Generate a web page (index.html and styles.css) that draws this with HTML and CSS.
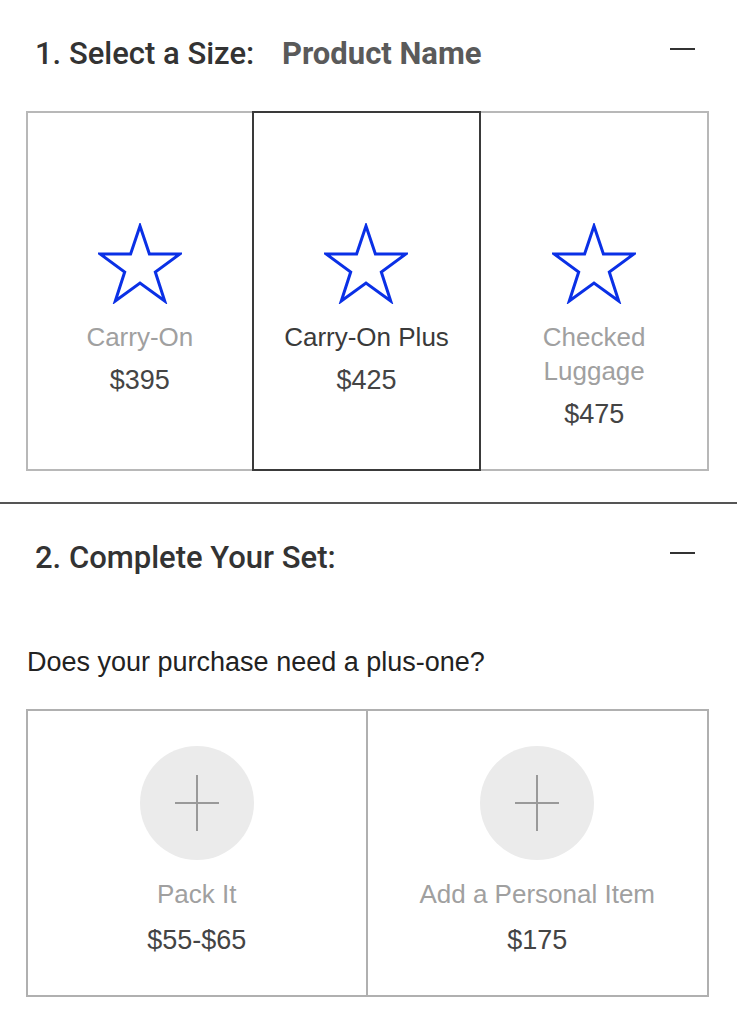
FILE: index.html
```html
<!DOCTYPE html>
<html lang="en">
<head>
    <meta charset="UTF-8">
    <title>Build Your Set</title>
    <link rel="stylesheet" href="styles.css">
</head>
<body>

<div class="section">
    <div class="section-head">
        <h2>1. Select a Size: <span class="product-name">Product Name</span></h2>
        <span class="collapse"></span>
    </div>

    <div class="size-grid">
        <div class="size-card">
            <svg class="star" viewBox="0 0 84 81">
                <polygon points="42,3 51.4,31 81.9,31 57.3,49 66.7,78 42,60 17.3,78 26.7,49 2.1,31 32.6,31"/>
            </svg>
            <div class="size-name">Carry-On</div>
            <div class="price">$395</div>
        </div>
        <div class="size-card selected">
            <svg class="star" viewBox="0 0 84 81">
                <polygon points="42,3 51.4,31 81.9,31 57.3,49 66.7,78 42,60 17.3,78 26.7,49 2.1,31 32.6,31"/>
            </svg>
            <div class="size-name">Carry-On Plus</div>
            <div class="price">$425</div>
        </div>
        <div class="size-card">
            <svg class="star" viewBox="0 0 84 81">
                <polygon points="42,3 51.4,31 81.9,31 57.3,49 66.7,78 42,60 17.3,78 26.7,49 2.1,31 32.6,31"/>
            </svg>
            <div class="size-name">Checked<br>Luggage</div>
            <div class="price">$475</div>
        </div>
    </div>
</div>

<hr class="divider">

<div class="section">
    <div class="section-head">
        <h2>2. Complete Your Set:</h2>
        <span class="collapse"></span>
    </div>

    <p class="question">Does your purchase need a plus-one?</p>

    <div class="addon-grid">
        <div class="addon-card">
            <div class="add-circle"></div>
            <div class="addon-name">Pack It</div>
            <div class="price">$55-$65</div>
        </div>
        <div class="addon-card">
            <div class="add-circle"></div>
            <div class="addon-name">Add a Personal Item</div>
            <div class="price">$175</div>
        </div>
    </div>
</div>

</body>
</html>
```

FILE: styles.css
```css
body {
    margin: 0;
    font-family: 'Liberation Sans', Arial, sans-serif;
    background: white;
    color: #333;
    width: 737px;
}

.section {
    padding: 0 28px 0 26px;
}

.section-head {
    display: flex;
    justify-content: space-between;
    align-items: center;
    padding: 36px 14px 0 9px;
}

.section-head h2 {
    margin: 0;
    font-family: Roboto, 'Liberation Sans', sans-serif;
    font-size: 31px;
    line-height: 35px;
    font-weight: 500;
    color: #333;
}

.product-name {
    margin-left: 20px;
    font-weight: bold;
    color: #5a5a5a;
}

.collapse {
    width: 25px;
    height: 2px;
    background: #333;
    margin-top: -9px;
}

.size-grid {
    display: grid;
    grid-template-columns: repeat(3, 1fr);
    margin-top: 40px;
    height: 360px;
}

.size-card {
    border: 2px solid #b8b8b8;
    text-align: center;
    padding-top: 110px;
    box-sizing: border-box;
}

.size-card + .size-card {
    margin-left: -2px;
}

.size-card.selected {
    border-color: #3a3a3a;
    position: relative;
}

.star {
    width: 84px;
    height: 81px;
    display: block;
    margin: 0 auto;
}

.star polygon {
    fill: none;
    stroke: #0a30e6;
    stroke-width: 3;
}

.size-name {
    margin-top: 16px;
    font-size: 26px;
    line-height: 34px;
    color: #a0a0a0;
}

.selected .size-name {
    color: #3a3a3a;
}

.price {
    margin-top: 9px;
    font-size: 27px;
    line-height: 34px;
    color: #444;
}

.divider {
    margin: 31px 0 0;
    border: none;
    border-top: 2px solid #555;
}

.question {
    margin: 72px 0 0 1px;
    font-size: 27px;
    line-height: 31px;
    color: #222;
}

.addon-grid {
    display: grid;
    grid-template-columns: 1fr 1fr;
    margin-top: 31px;
    height: 288px;
}

.addon-card {
    border: 2px solid #b0b0b0;
    text-align: center;
    padding-top: 35px;
    box-sizing: border-box;
}

.addon-card + .addon-card {
    margin-left: -2px;
}

.add-circle {
    width: 114px;
    height: 114px;
    border-radius: 50%;
    background: #ebebeb;
    margin: 0 auto;
    position: relative;
}

.add-circle::before,
.add-circle::after {
    content: "";
    position: absolute;
    background: #999;
    left: 50%;
    top: 50%;
    transform: translate(-50%, -50%);
}

.add-circle::before {
    width: 44px;
    height: 2px;
}

.add-circle::after {
    width: 2px;
    height: 56px;
}

.addon-name {
    margin-top: 17px;
    font-size: 26px;
    line-height: 34px;
    color: #a0a0a0;
}

.addon-card .price {
    margin-top: 12px;
}
```
